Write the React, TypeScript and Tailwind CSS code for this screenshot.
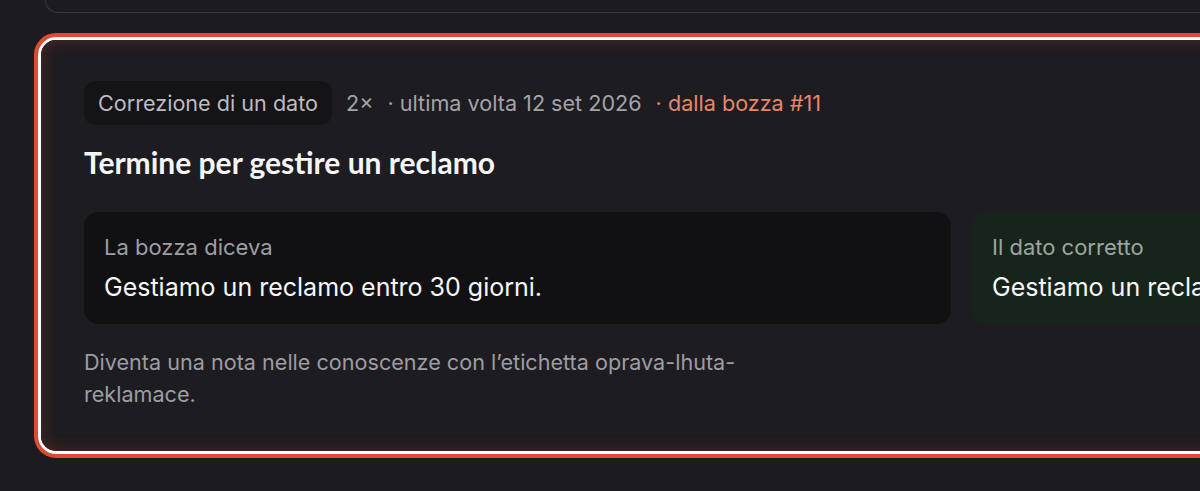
export default function App() {
  return (
    <div
      className="w-[1200px] h-[491px] overflow-hidden bg-[#1c1b1f] pl-[34px]"
      style={{ fontFamily: 'Inter, "Noto Sans", sans-serif' }}
    >
      {/* previous card, cut off at the top */}
      <div className="ml-[11px] w-[1900px] h-[13px] border-b border-l border-[#3a393f] rounded-bl-[16px]" />

      {/* highlighted card */}
      <div className="mt-[20px] w-[1855px] rounded-[22px] border-[4px] border-[#e04b30]">
        <div className="rounded-[18px] border-[3px] border-white">
          <div className="rounded-[15px] bg-[#1d1c20] shadow-[inset_0_0_16px_rgba(224,75,48,0.28)] pt-[41px] pb-[41px] px-[43px]">
            {/* meta row */}
            <div className="flex items-center gap-[14px] text-[21.6px] text-[#a3a3a9]">
              <span className="rounded-[12px] bg-[#141316] px-[14px] h-[44px] flex items-center text-[#bcbcc1]">
                Correzione di un dato
              </span>
              <span>2×</span>
              <span>· ultima volta 12 set 2026</span>
              <span className="text-[#e8866a]">· dalla bozza #11</span>
            </div>

            {/* title */}
            <h2
              className="mt-[17px] text-[30px] font-bold text-[#f5f5f6] leading-[40px]"
              style={{ fontFamily: 'Lato, "Noto Sans", sans-serif' }}
            >
              Termine per gestire un reclamo
            </h2>

            {/* comparison */}
            <div className="mt-[30px] grid grid-cols-2 gap-[21px]">
              <div className="rounded-[14px] bg-[#111113] h-[112px] px-[20px] pt-[22px]">
                <div className="text-[22px] leading-[26px] text-[#9e9ea4]">La bozza diceva</div>
                <div className="mt-[12px] text-[25px] leading-[30px] text-[#f7f7f8]">
                  Gestiamo un reclamo entro 30 giorni.
                </div>
              </div>
              <div className="rounded-[14px] bg-[#17241c] h-[112px] px-[20px] pt-[22px]">
                <div className="text-[22px] leading-[26px] text-[#9ea59f]">Il dato corretto</div>
                <div className="mt-[12px] text-[25px] leading-[30px] text-[#f7f7f8]">
                  Gestiamo un reclamo entro 15 giorni lavorativi.
                </div>
              </div>
            </div>

            {/* footer */}
            <p className="mt-[22px] max-w-[710px] text-[21.6px] leading-[32px] text-[#9c9ca2]">
              Diventa una nota nelle conoscenze con l’etichetta oprava-lhuta-reklamace.
            </p>
          </div>
        </div>
      </div>
    </div>
  );
}
